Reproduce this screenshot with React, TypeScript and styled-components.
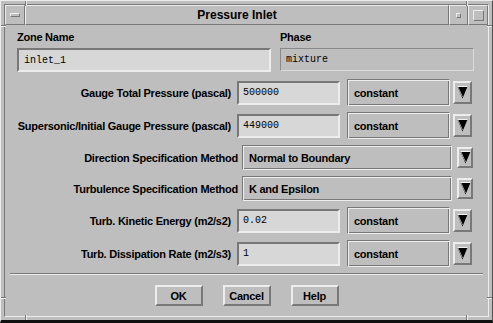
import styled, { createGlobalStyle } from "styled-components";

const panel = "#bebebe";
const fieldBg = "#d7d7d7";
const light = "#ededed";
const dark = "#787878";

const GlobalStyle = createGlobalStyle`
  html, body { margin: 0; padding: 0; background: ${panel}; }
  body { font-family: "Liberation Sans", Arial, sans-serif; color: #000; }
`;

const rows = [
  { label: "Gauge Total Pressure (pascal)", value: "500000", method: "constant" },
  { label: "Supersonic/Initial Gauge Pressure (pascal)", value: "449000", method: "constant" },
  { label: "Direction Specification Method", choice: "Normal to Boundary" },
  { label: "Turbulence Specification Method", choice: "K and Epsilon" },
  { label: "Turb. Kinetic Energy (m2/s2)", value: "0.02", method: "constant" },
  { label: "Turb. Dissipation Rate (m2/s3)", value: "1", method: "constant" },
];

function Arrow() {
  return (
    <svg width="11" height="13" viewBox="0 0 11 13">
      <polygon points="0.5,0.5 10.5,0.5 5.5,12.5" fill="#000" />
      <polyline points="0.5,0.5 10.5,0.5" stroke="#f4f4f4" strokeWidth="1" fill="none" />
      <polyline points="1,1 5.5,11" stroke="#9a9a9a" strokeWidth="1" fill="none" />
    </svg>
  );
}

function App() {
  return (
    <>
      <GlobalStyle />
      <Window>
        <Notch $h style={{ left: 0, top: 24 }} />
        <Notch $h style={{ right: 0, top: 24 }} />
        <Notch $h style={{ left: 0, top: 296 }} />
        <Notch $h style={{ right: 0, top: 296 }} />
        <Notch style={{ left: 24, top: 0 }} />
        <Notch style={{ left: 465, top: 0 }} />
        <Notch style={{ left: 24, bottom: 0 }} />
        <Notch style={{ left: 465, bottom: 0 }} />
        <Inner>
          <TitleBar>
            <MenuButton>
              <MenuBar />
            </MenuButton>
            <TitleArea>Pressure Inlet</TitleArea>
            <MinButton>
              <MinBox />
            </MinButton>
            <MaxButton>
              <MaxBox />
            </MaxButton>
          </TitleBar>
          <Client>
            <TopSection>
              <TopColumn>
                <TopLabel>Zone Name</TopLabel>
                <EditField>inlet_1</EditField>
              </TopColumn>
              <TopColumn>
                <TopLabel>Phase</TopLabel>
                <ReadField>mixture</ReadField>
              </TopColumn>
            </TopSection>
            <Rows>
              {rows.map((r) =>
                r.choice ? (
                  <ChoiceRow key={r.label}>
                    <RowLabel>{r.label}</RowLabel>
                    <OptionMenu $wide>{r.choice}</OptionMenu>
                    <ArrowButton $narrow>
                      <Arrow />
                    </ArrowButton>
                  </ChoiceRow>
                ) : (
                  <ValueRow key={r.label}>
                    <RowLabel>{r.label}</RowLabel>
                    <ValueField>{r.value}</ValueField>
                    <OptionMenu>{r.method}</OptionMenu>
                    <ArrowButton>
                      <Arrow />
                    </ArrowButton>
                  </ValueRow>
                )
              )}
            </Rows>
            <Separator />
            <ButtonRow>
              <PushButton>OK</PushButton>
              <PushButton>Cancel</PushButton>
              <PushButton>Help</PushButton>
            </ButtonRow>
          </Client>
        </Inner>
      </Window>
    </>
  );
}

const Window = styled.div`
  position: relative;
  width: 493px;
  height: 323px;
  box-sizing: border-box;
  background: ${panel};
  border-top: 1px solid ${light};
  border-left: 1px solid ${light};
  border-right: 1px solid #505050;
  border-bottom: 3px solid #101010;
  padding: 3px 3px 3px 3px;
  display: flex;
`;
const Notch = styled.span<{ $h?: boolean }>`
  position: absolute;
  width: ${(p) => (p.$h ? "5px" : "2px")};
  height: ${(p) => (p.$h ? "2px" : "5px")};
  box-sizing: border-box;
  border-${(p) => (p.$h ? "top" : "left")}: 1px solid ${dark};
  border-${(p) => (p.$h ? "bottom" : "right")}: 1px solid ${light};
`;
const Inner = styled.div`
  flex: 1;
  display: flex;
  flex-direction: column;
  border: 1px solid;
  border-color: ${dark} ${light} ${light} ${dark};
`;
const TitleBar = styled.div`
  display: flex;
  height: 20px;
`;
const Raised = styled.div`
  box-sizing: border-box;
  border: 1px solid;
  border-color: ${light} ${dark} ${dark} ${light};
  display: flex;
  align-items: center;
  justify-content: center;
`;
const MenuButton = styled(Raised)`
  width: 20px;
`;
const MenuBar = styled.div`
  width: 10px;
  height: 4px;
  box-sizing: border-box;
  border: 1px solid;
  border-color: ${light} ${dark} ${dark} ${light};
`;
const TitleArea = styled(Raised)`
  flex: 1;
  font-size: 12px;
  font-weight: bold;
`;
const MinButton = styled(Raised)`
  width: 19px;
`;
const MinBox = styled.div`
  width: 5px;
  height: 5px;
  box-sizing: border-box;
  border: 1px solid;
  border-color: ${light} ${dark} ${dark} ${light};
`;
const MaxButton = styled(Raised)`
  width: 20px;
`;
const MaxBox = styled.div`
  width: 11px;
  height: 11px;
  box-sizing: border-box;
  border: 1px solid;
  border-color: ${light} ${dark} ${dark} ${light};
`;
const Client = styled.div`
  flex: 1;
  display: flex;
  flex-direction: column;
  padding-top: 6px;
`;
const TopSection = styled.div`
  display: grid;
  grid-template-columns: 254px 194px;
  gap: 9px;
  padding: 0 11px 0 12px;
`;
const TopColumn = styled.div`
  display: flex;
  flex-direction: column;
  gap: 4px;
`;
const BoldText = styled.div`
  font-size: 11px;
  font-weight: bold;
  letter-spacing: -0.25px;
  white-space: nowrap;
`;
const TopLabel = styled(BoldText)`
  line-height: 13px;
  height: 13px;
`;
const MonoText = styled.div`
  box-sizing: border-box;
  display: flex;
  align-items: center;
  font-family: "Liberation Mono", "Courier New", monospace;
  font-size: 10px;
  white-space: pre;
`;
const EditField = styled(MonoText)`
  height: 24px;
  padding-left: 5px;
  background: ${fieldBg};
  border: 2px solid;
  border-color: ${dark} ${light} ${light} ${dark};
`;
const ReadField = styled(MonoText)`
  height: 23px;
  padding-left: 5px;
  border: 1px solid;
  border-color: #8a8a8a #dadada #dadada #8a8a8a;
`;
const Rows = styled.div`
  display: flex;
  flex-direction: column;
  gap: 6px;
  margin-top: 7px;
`;
const ValueRow = styled.div`
  display: flex;
  align-items: center;
  justify-content: flex-end;
  height: 27px;
  padding-right: 16px;
  & > :nth-child(2) { margin-left: 6px; }
  & > :nth-child(3) { margin-left: 7px; }
  & > :nth-child(4) { margin-left: 3px; }
`;
const ChoiceRow = styled.div`
  display: flex;
  align-items: center;
  justify-content: flex-end;
  height: 25px;
  padding-right: 15px;
  & > :nth-child(2) { margin-left: 4px; }
  & > :nth-child(3) { margin-left: 5px; }
`;
const RowLabel = styled(BoldText)``;
const ValueField = styled(EditField)`
  width: 103px;
  padding-left: 4px;
`;
const OptionMenu = styled(BoldText)<{ $wide?: boolean }>`
  box-sizing: border-box;
  width: ${(p) => (p.$wide ? "210px" : "103px")};
  height: ${(p) => (p.$wide ? "25px" : "27px")};
  display: flex;
  align-items: center;
  padding-left: 6px;
  border: 1px solid;
  border-color: ${dark} ${light} ${light} ${dark};
  box-shadow: inset 1px 1px 0 ${light}, inset -1px -1px 0 ${dark};
`;
const ArrowButton = styled.div<{ $narrow?: boolean }>`
  box-sizing: border-box;
  width: ${(p) => (p.$narrow ? "16px" : "19px")};
  height: ${(p) => (p.$narrow ? "21px" : "23px")};
  display: flex;
  align-items: center;
  justify-content: center;
  border: 2px solid;
  border-color: ${light} ${dark} ${dark} ${light};
`;
const Separator = styled.div`
  margin: 6px 5px 0 5px;
  height: 0;
  border-top: 1px solid ${dark};
  border-bottom: 1px solid ${light};
`;
const ButtonRow = styled.div`
  display: flex;
  justify-content: center;
  gap: 20px;
  margin-top: 10px;
`;
const PushButton = styled(BoldText)`
  box-sizing: border-box;
  width: 48px;
  height: 21px;
  display: flex;
  align-items: center;
  justify-content: center;
  border: 2px solid;
  border-color: ${light} ${dark} ${dark} ${light};
`;

export default App;
